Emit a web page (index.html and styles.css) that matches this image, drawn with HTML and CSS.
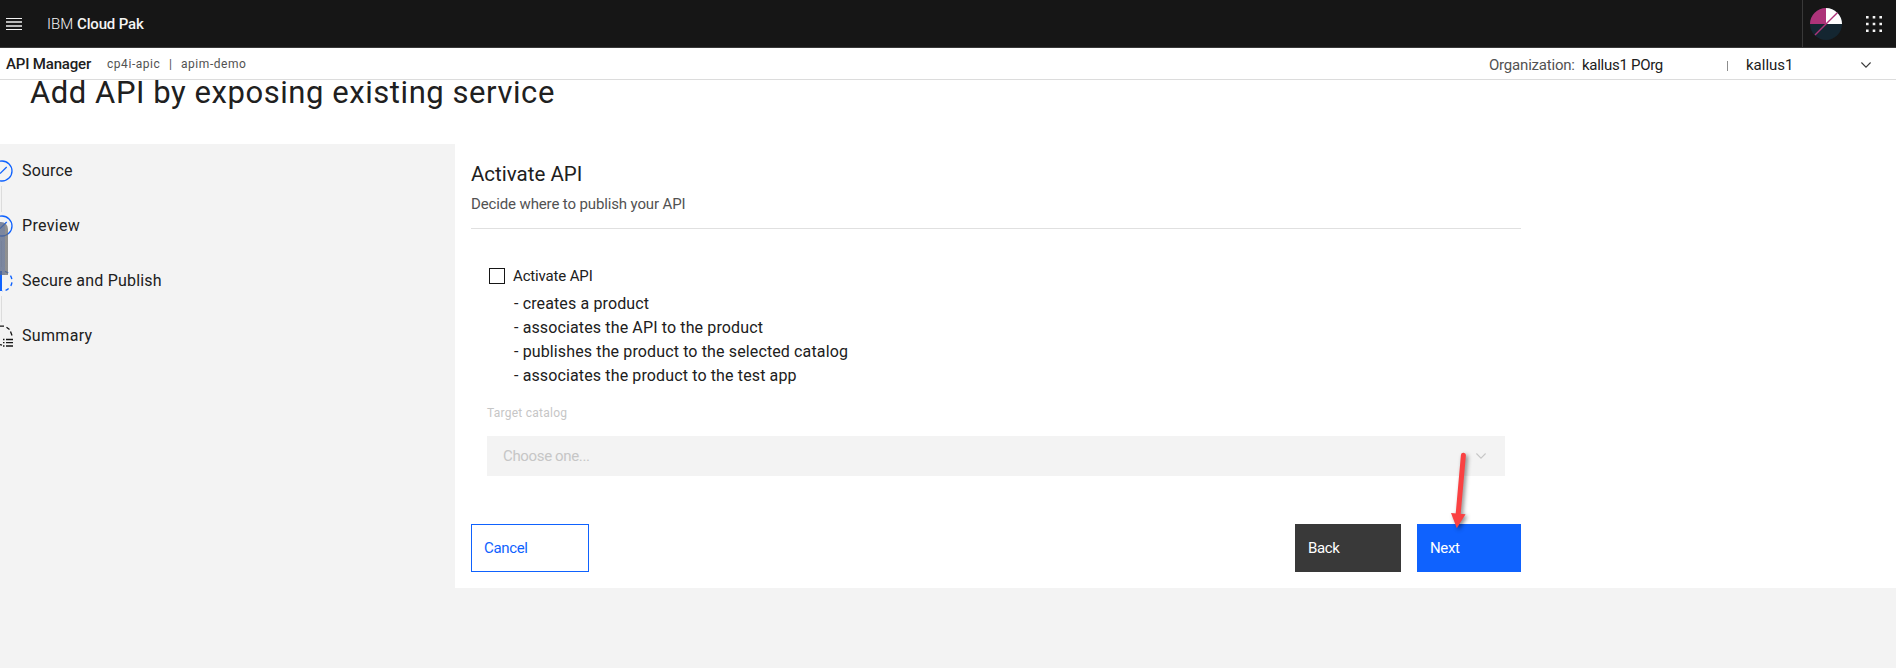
FILE: index.html
```html
<!DOCTYPE html>
<html lang="en">
<head>
<meta charset="utf-8">
<title>API Manager</title>
<link rel="stylesheet" href="styles.css">
</head>
<body>
<header class="shell">
  <svg class="menu" width="16" height="12" viewBox="0 0 16 12"><path d="M0 .5h16M0 11.5h16" stroke="#f4f4f4"/><path d="M0 4h16M0 8h16" stroke="#b8b8b8" stroke-width="2"/></svg>
  <span class="brand">IBM</span><strong class="brand-name">Cloud Pak</strong>
  <div class="shell-actions">
    <svg class="avatar" width="32" height="32" viewBox="0 0 32 32"><circle cx="16" cy="16" r="16" fill="#142631"/><path d="M16 0A16 16 0 0 0 0 16h16z" fill="#ad3379"/><path d="M16 0a16 16 0 0 1 16 16H16z" fill="#fff"/><path d="M27.3 4.7 5 27" stroke="#ad3379" stroke-width="1.4"/></svg>
    <svg class="grid" width="16" height="16" viewBox="0 0 16 16"><path d="M0 1.3h16M0 8h16M0 14.7h16" stroke="#f4f4f4" stroke-width="2.6" stroke-dasharray="2.6 4.1"/></svg>
  </div>
</header>
<nav class="context">
  <strong class="product">API Manager</strong>
  <span class="inst">cp4i-apic</span><span class="bar">|</span><span class="inst">apim-demo</span>
  <div class="org">
    <span class="org-label">Organization:</span><span class="org-name">kallus1 POrg</span><span class="sep"></span><span class="user">kallus1</span>
    <svg class="chev" width="10" height="6" viewBox="0 0 10 6"><path d="M.4.5 5 5.1 9.600.5" fill="none" stroke="#393939" stroke-width="1.1"/></svg>
  </div>
</nav>
<h1 class="title"><span>Add API by exposing existing service</span></h1>
<div class="body">
  <aside class="steps">
    <div class="step"><svg width="13" height="22" viewBox="0 0 13 22"><circle cx="2" cy="11" r="10" fill="none" stroke="#0f62fe" stroke-width="1.3"/><path d="M0 13.6 6.7 7" stroke="#0f62fe" stroke-width="1.3"/></svg><span>Source</span></div>
    <div class="link"></div>
    <div class="step"><svg width="13" height="22" viewBox="0 0 13 22"><circle cx="2" cy="11" r="10" fill="none" stroke="#0f62fe" stroke-width="1.3"/><path d="M0 13.6 6.7 7" stroke="#0f62fe" stroke-width="1.3"/></svg><span class="wide">Preview</span></div>
    <div class="link"></div>
    <div class="step"><svg width="13" height="22" viewBox="0 0 13 22"><path d="M0 1h2v20H0z" fill="#0f62fe"/><path d="M2 1A10 10 0 0 1 2 21" fill="none" stroke="#0f62fe" stroke-width="1.4" stroke-dasharray="3.6 3.4" stroke-dashoffset="-3"/></svg><span>Secure and Publish</span></div>
    <div class="link"></div>
    <div class="step"><svg width="13" height="22" viewBox="0 0 13 22"><path d="M0 1.200h4M6.500 2.200l3 2.200M10.500 6.500l1.500 4M0 19.500l2 .7" fill="none" stroke="#161616" stroke-width="1.3"/><path d="M3 14.500h1.500M6 14.500h7M3 17.700h1.500M6 17.700h7M3 21h1.500M6 21h7" stroke="#161616" stroke-width="1.3"/></svg><span class="wide">Summary</span></div>
    <div class="thumb"></div>
  </aside>
  <main class="panel">
    <h2 class="heading"><span>Activate API</span></h2>
    <p class="lead"><span>Decide where to publish your API</span></p>
    <label class="check"><i class="box"></i><span>Activate API</span></label>
    <div class="list">
      <div>- creates a product</div>
      <div>- associates the API to the product</div>
      <div>- publishes the product to the selected catalog</div>
      <div>- associates the product to the test app</div>
    </div>
    <div class="field-label"><span>Target catalog</span></div>
    <div class="select"><span>Choose one...</span><svg width="10" height="6" viewBox="0 0 10 6"><path d="M.4.5 5 5.1 9.600.5" fill="none" stroke="#c6c6c6" stroke-width="1.1"/></svg></div>
    <div class="actions">
      <button class="btn cancel"><span>Cancel</span></button>
      <button class="btn back"><span>Back</span></button>
      <button class="btn next"><span>Next</span></button>
    </div>
    <svg class="arrow" width="40" height="90" viewBox="0 0 40 90"><path d="M18.4 5.2 13 66" stroke="#fa4142" stroke-width="5" stroke-linecap="round"/><path d="M6 63l14.500 1.300-8.700 14z" fill="#fa4142"/></svg>
  </main>
</div>
</body>
</html>
```
FILE: styles.css
```css
* { box-sizing: border-box; }
body { margin: 0; height: 668px; overflow: hidden; background: #f3f3f3; color: #202020; font: 16px/24px Roboto, "Liberation Sans", sans-serif; }
h1, h2, p { margin: 0; font-weight: 400; }
svg { flex: none; display: block; }
span, strong { white-space: nowrap; }
.shell { height: 48px; background: #161616; border-bottom: 1px solid #393939; display: flex; align-items: center; color: #f4f4f4; padding-left: 6px; font-size: 15px; }
.menu { margin-top: 1px; }
.brand { margin-left: 25px; width: 30px; font-weight: 300; }
.brand-name { font-weight: 500; letter-spacing: -.15px; }
.shell-actions { margin-left: auto; width: 94px; height: 47px; border-left: 1px solid #393939; display: flex; align-items: center; padding: 1px 0 0 7px; }
.grid { margin-left: 24px; }
.context { height: 32px; background: #fff; border-bottom: 1px solid #dcdcdc; display: flex; align-items: center; padding-left: 6px; font-size: 15px; }
.product { font-weight: 500; width: 101px; letter-spacing: -.17px; }
.inst { font-size: 12px; color: #525252; letter-spacing: .55px; width: 62px; }
.bar { font-size: 12px; color: #525252; width: 12px; }
.org { margin-left: auto; width: 407px; display: flex; align-items: center; padding-top: 2px; }
.org-label { color: #525252; width: 93px; letter-spacing: -.2px; }
.org-name { width: 145px; letter-spacing: -.28px; }
.sep { width: 1px; height: 10px; background: #8d8d8d; margin: 3px 18px 0 0; }
.user { width: 115px; }
.title { height: 64px; background: #fff; padding: 0 0 0 30px; font-size: 31px; line-height: 26px; letter-spacing: .56px; }
.body { height: 444px; display: flex; background: #fff; }
.steps { width: 455px; background: #f3f3f3; padding-top: 16px; position: relative; }
.step { height: 22px; display: flex; align-items: center; gap: 9px; letter-spacing: .2px; }
.wide { letter-spacing: .32px; }
.link { width: 1px; height: 26px; margin: 4px 0 3px 1px; background: #dcdcdc; }
.thumb { position: absolute; left: 0; top: 78px; width: 8px; height: 53px; background: linear-gradient(90deg, rgba(90,104,135,.78) 5px, rgba(110,110,110,.75) 5px); border-radius: 0 7px 0 0; }
.panel { width: 1066px; padding: 16px 0 0 16px; position: relative; }
.heading { font-size: 20.5px; line-height: 28px; }
.lead { font-size: 15px; line-height: 20px; color: #525252; padding: 6px 0 14px; border-bottom: 1px solid #e0e0e0; height: 41px; letter-spacing: -.13px; }
.check { display: flex; align-items: center; gap: 8px; height: 20px; margin: 37px 0 0 18px; font-size: 15px; letter-spacing: -.15px; }
.box { width: 16px; height: 16px; border: 1px solid #161616; }
.list { margin: 6px 0 0 43px; height: 96px; letter-spacing: .13px; }
.field-label { margin: 17px 0 0 16px; height: 16px; line-height: 16px; font-size: 12px; color: #c6c6c6; letter-spacing: .25px; }
.select { margin: 15px 16px 0; height: 40px; background: #f3f3f3; display: flex; align-items: center; justify-content: space-between; padding: 0 19px 0 16px; font-size: 15px; letter-spacing: -.35px; color: #c6c6c6; }
.actions { display: flex; margin-top: 48px; }
.btn { height: 48px; border: 1px solid transparent; padding: 0 0 0 12px; font: 15px/20px Roboto, sans-serif; letter-spacing: -.33px; text-align: left; color: #fff; }
.cancel { width: 118px; margin-right: auto; background: #fff; border-color: #0f62fe; color: #0f62fe; }
.back { width: 106px; margin-right: 16px; background: #393939; }
.next { width: 104px; background: #0f62fe; }
.arrow { position: absolute; left: 990px; top: 306px; filter: drop-shadow(2px 2px 2px rgba(0,0,0,.45)); }
```
